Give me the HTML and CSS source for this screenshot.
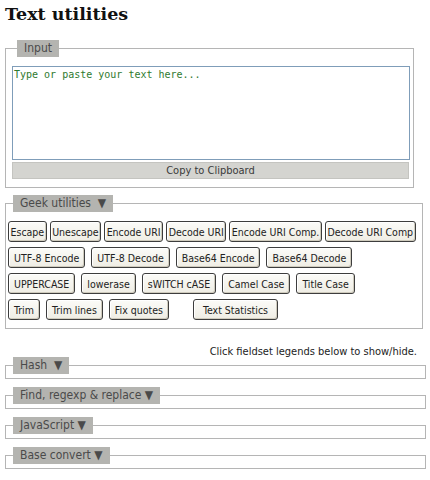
FILE: index.html
```html
<!DOCTYPE html>
<html>
<head>
<meta charset="utf-8">
<title>Text utilities</title>
<link rel="stylesheet" href="styles.css">
</head>
<body>
<h1 class="title">Text utilities</h1>

<fieldset class="panel panel-input">
  <legend class="legend">Input</legend>
  <textarea class="input-text" placeholder="Type or paste your text here..."></textarea>
  <button class="copy-btn" type="button">Copy to Clipboard</button>
</fieldset>

<fieldset class="panel panel-geek">
  <legend class="legend">Geek utilities&nbsp; ▼</legend>
  <div class="btn-row btn-row-tight">
    <button class="tool-btn" type="button">Escape</button>
    <button class="tool-btn" type="button">Unescape</button>
    <button class="tool-btn" type="button">Encode URI</button>
    <button class="tool-btn" type="button">Decode URI</button>
    <button class="tool-btn" type="button">Encode URI Comp.</button>
    <button class="tool-btn" type="button">Decode URI Comp</button>
  </div>
  <div class="btn-row">
    <button class="tool-btn" type="button">UTF-8 Encode</button>
    <button class="tool-btn" type="button">UTF-8 Decode</button>
    <button class="tool-btn" type="button">Base64 Encode</button>
    <button class="tool-btn" type="button">Base64 Decode</button>
  </div>
  <div class="btn-row">
    <button class="tool-btn" type="button">UPPERCASE</button>
    <button class="tool-btn" type="button">lowerase</button>
    <button class="tool-btn" type="button">sWITCH cASE</button>
    <button class="tool-btn" type="button">Camel Case</button>
    <button class="tool-btn" type="button">Title Case</button>
  </div>
  <div class="btn-row">
    <button class="tool-btn" type="button">Trim</button>
    <button class="tool-btn" type="button">Trim lines</button>
    <button class="tool-btn" type="button">Fix quotes</button>
    <button class="tool-btn btn-spaced" type="button">Text Statistics</button>
  </div>
</fieldset>

<p class="hint">Click fieldset legends below to show/hide.</p>

<fieldset class="panel panel-closed">
  <legend class="legend">Hash&nbsp; ▼</legend>
</fieldset>
<fieldset class="panel panel-closed">
  <legend class="legend">Find, regexp &amp; replace&nbsp;▼</legend>
</fieldset>
<fieldset class="panel panel-closed">
  <legend class="legend">JavaScript&nbsp;▼</legend>
</fieldset>
<fieldset class="panel panel-closed">
  <legend class="legend">Base convert&nbsp;▼</legend>
</fieldset>
</body>
</html>
```

FILE: styles.css
```css
html, body {
  margin: 0;
  padding: 0;
  background: #ffffff;
}

body {
  padding: 0 0 0 5px;
  font-family: Tahoma, "DejaVu Sans Condensed", sans-serif;
  font-size: 11px;
  color: #333333;
}

.title {
  margin: 0;
  padding-top: 2px;
  font-family: "DejaVu Serif", Georgia, serif;
  font-size: 17.5px;
  line-height: 24px;
  font-weight: bold;
  color: #111111;
  height: 40px;
  box-sizing: border-box;
}

.panel {
  margin: 0 0 8px 0;
  border: 1px solid #b5b5b5;
  padding: 0 2px;
  min-width: 0;
}

.legend {
  margin-left: 5px;
  padding: 0 7px;
  height: 17px;
  line-height: 17px;
  background: #b4b4b0;
  color: #4a4a4a;
  font-size: 12px;
}

.panel-input {
  margin-right: 16px;
  padding: 9px 3px 8px 6px;
}

.input-text {
  display: block;
  box-sizing: border-box;
  width: 398px;
  height: 94px;
  margin: 0;
  padding: 2px 1px;
  border: 1px solid #7f9db9;
  resize: none;
  font-family: "DejaVu Sans Mono", monospace;
  font-size: 10px;
  line-height: 12px;
  color: #2f7a2f;
}

.input-text::placeholder {
  color: #2f7a2f;
  opacity: 1;
}

.copy-btn {
  display: block;
  box-sizing: border-box;
  width: 397px;
  height: 17px;
  margin: 2px 0 0 0;
  padding: 0;
  border: 1px solid #c4c4c0;
  background: #d4d4d0;
  font-family: inherit;
  font-size: 11px;
  color: #3a3a3a;
  line-height: 15px;
}

.panel-geek {
  margin-top: -1px;
  margin-right: 7px;
  padding: 9px 2px 8px 2px;
}

.btn-row {
  display: flex;
  gap: 6px;
  margin-bottom: 5px;
}

.btn-row:last-child {
  margin-bottom: 0;
}

.btn-row-tight {
  gap: 3px;
}

.tool-btn {
  box-sizing: border-box;
  height: 21px;
  margin: 0;
  padding: 0 5px;
  border: 1px solid #3d3d3d;
  border-radius: 3px;
  box-shadow: inset 1px 1px 0 #ffffff, inset -1px -1px 0 #cfcbbd;
  background: linear-gradient(#fbfbf8, #efede4);
  font-family: inherit;
  font-size: 10.5px;
  color: #222222;
  white-space: nowrap;
}

.btn-row-tight .tool-btn {
  padding: 0 1.5px;
}

.btn-spaced {
  margin-left: 18px;
  padding: 0 9px;
}

.hint {
  margin: 18px 0 0 0;
  padding-right: 13px;
  text-align: right;
  line-height: 10px;
  color: #222222;
}

.panel-closed {
  margin-right: 4px;
  padding: 0 2px 4px 2px;
}
```
